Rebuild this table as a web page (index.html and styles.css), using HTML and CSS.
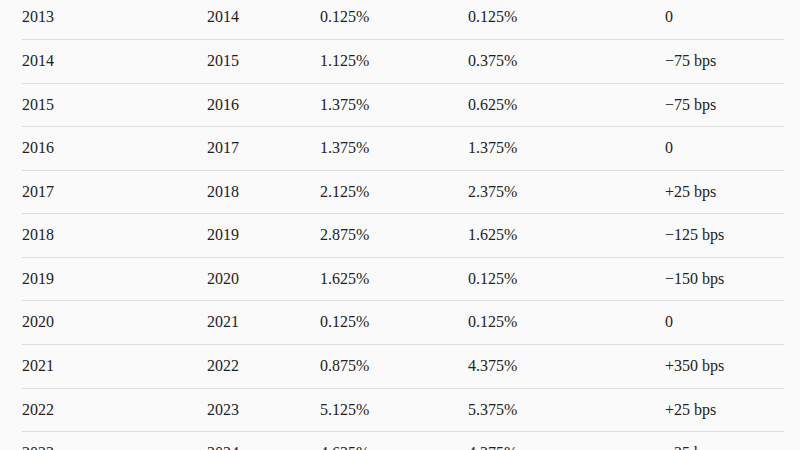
FILE: index.html
```html
<!DOCTYPE html>
<html lang="en">
<head>
<meta charset="utf-8">
<title>Rates</title>
<link rel="stylesheet" href="styles.css">
</head>
<body>
<div class="wrap">
<table class="rates">
<colgroup>
<col class="c1"><col class="c2"><col class="c3"><col class="c4"><col class="c5">
</colgroup>
<tbody>
<tr><td>2013</td><td>2014</td><td>0.125%</td><td>0.125%</td><td>0</td></tr>
<tr><td>2014</td><td>2015</td><td>1.125%</td><td>0.375%</td><td>−75 bps</td></tr>
<tr><td>2015</td><td>2016</td><td>1.375%</td><td>0.625%</td><td>−75 bps</td></tr>
<tr><td>2016</td><td>2017</td><td>1.375%</td><td>1.375%</td><td>0</td></tr>
<tr><td>2017</td><td>2018</td><td>2.125%</td><td>2.375%</td><td>+25 bps</td></tr>
<tr><td>2018</td><td>2019</td><td>2.875%</td><td>1.625%</td><td>−125 bps</td></tr>
<tr><td>2019</td><td>2020</td><td>1.625%</td><td>0.125%</td><td>−150 bps</td></tr>
<tr><td>2020</td><td>2021</td><td>0.125%</td><td>0.125%</td><td>0</td></tr>
<tr><td>2021</td><td>2022</td><td>0.875%</td><td>4.375%</td><td>+350 bps</td></tr>
<tr><td>2022</td><td>2023</td><td>5.125%</td><td>5.375%</td><td>+25 bps</td></tr>
<tr><td>2023</td><td>2024</td><td>4.625%</td><td>4.375%</td><td>−25 bps</td></tr>
</tbody>
</table>
</div>
</body>
</html>
```
FILE: styles.css
```css
html, body {
  margin: 0;
  padding: 0;
  background: #fafafa;
  overflow: hidden;
}
.wrap {
  padding: 0 16px 0 22px;
}
.rates {
  width: 762px;
  table-layout: fixed;
  border-collapse: collapse;
  margin-top: -3.56px;
  font-family: "Liberation Serif", "Times New Roman", serif;
  font-size: 16px;
  color: #222;
}
.c1 { width: 185px; }
.c2 { width: 113px; }
.c3 { width: 148px; }
.c4 { width: 197px; }
.c5 { width: 119px; }
.rates td {
  padding: 12px 0;
  line-height: 18.56px;
  border-bottom: 1px solid #dedede;
  text-align: left;
  white-space: nowrap;
}
```
